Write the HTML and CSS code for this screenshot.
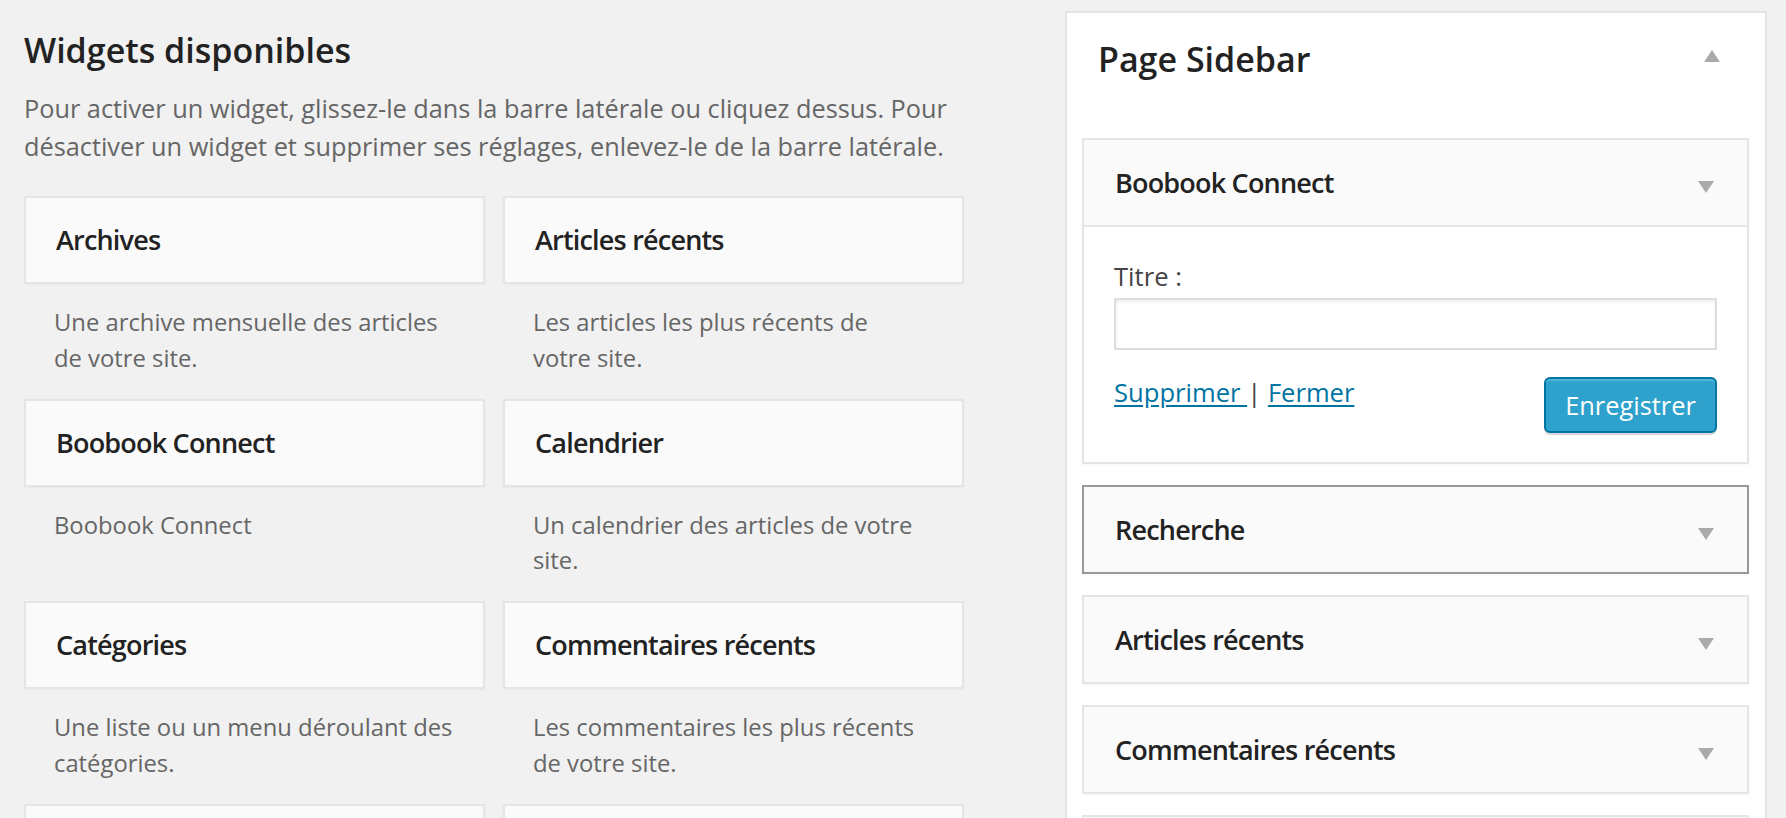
FILE: index.html
```html
<!DOCTYPE html>
<html lang="fr">
<head>
<meta charset="utf-8">
<title>Widgets</title>
<link rel="stylesheet" href="styles.css">
</head>
<body>
<div class="page">
  <section class="available">
    <h2 class="heading">Widgets disponibles</h2>
    <p class="intro">Pour activer un widget, glissez-le dans la barre latérale ou cliquez dessus. Pour désactiver un widget et supprimer ses réglages, enlevez-le de la barre latérale.</p>
    <div class="widget-grid">
      <div class="widget-item">
        <div class="widget-card"><h4 class="widget-title">Archives</h4></div>
        <p class="widget-desc">Une archive mensuelle des articles de votre site.</p>
      </div>
      <div class="widget-item">
        <div class="widget-card"><h4 class="widget-title">Articles récents</h4></div>
        <p class="widget-desc">Les articles les plus récents de votre site.</p>
      </div>
      <div class="widget-item">
        <div class="widget-card"><h4 class="widget-title">Boobook Connect</h4></div>
        <p class="widget-desc">Boobook Connect</p>
      </div>
      <div class="widget-item">
        <div class="widget-card"><h4 class="widget-title">Calendrier</h4></div>
        <p class="widget-desc">Un calendrier des articles de votre site.</p>
      </div>
      <div class="widget-item">
        <div class="widget-card"><h4 class="widget-title">Catégories</h4></div>
        <p class="widget-desc">Une liste ou un menu déroulant des catégories.</p>
      </div>
      <div class="widget-item">
        <div class="widget-card"><h4 class="widget-title">Commentaires récents</h4></div>
        <p class="widget-desc">Les commentaires les plus récents de votre site.</p>
      </div>
      <div class="widget-item">
        <div class="widget-card"></div>
      </div>
      <div class="widget-item">
        <div class="widget-card"></div>
      </div>
    </div>
  </section>

  <aside class="sidebar">
    <div class="sidebar-head">
      <h3 class="sidebar-title">Page Sidebar</h3>
      <svg class="toggle toggle-up" width="16" height="12" viewBox="0 0 16 12"><polygon points="8,0 16,12 0,12"/></svg>
    </div>
    <div class="sidebar-widgets">
      <div class="sw">
        <div class="sw-top">
          <h4 class="sw-title">Boobook Connect</h4>
          <svg class="toggle toggle-down" width="16" height="12" viewBox="0 0 16 12"><polygon points="0,0 16,0 8,12"/></svg>
        </div>
        <div class="sw-inside">
          <label class="field-label" for="titre">Titre :</label>
          <input class="field-input" id="titre" type="text">
          <div class="sw-actions">
            <div class="sw-links"><a class="link" href="#">Supprimer </a> | <a class="link" href="#">Fermer</a></div>
            <button class="btn-primary" type="button">Enregistrer</button>
          </div>
        </div>
      </div>
      <div class="sw sw-hover">
        <div class="sw-top">
          <h4 class="sw-title">Recherche</h4>
          <svg class="toggle toggle-down" width="16" height="12" viewBox="0 0 16 12"><polygon points="0,0 16,0 8,12"/></svg>
        </div>
      </div>
      <div class="sw">
        <div class="sw-top">
          <h4 class="sw-title">Articles récents</h4>
          <svg class="toggle toggle-down" width="16" height="12" viewBox="0 0 16 12"><polygon points="0,0 16,0 8,12"/></svg>
        </div>
      </div>
      <div class="sw">
        <div class="sw-top">
          <h4 class="sw-title">Commentaires récents</h4>
          <svg class="toggle toggle-down" width="16" height="12" viewBox="0 0 16 12"><polygon points="0,0 16,0 8,12"/></svg>
        </div>
      </div>
      <div class="sw">
        <div class="sw-top"></div>
      </div>
    </div>
  </aside>
</div>
</body>
</html>
```

FILE: styles.css
```css
html {
  overflow: hidden;
  height: 100%;
}

body {
  margin: 0;
  background: #f1f1f1;
  font-family: "Open Sans", "Noto Sans", "Liberation Sans", sans-serif;
  color: #444;
}

.page {
  display: flex;
  align-items: flex-start;
  padding-left: 24px;
}

/* ---------- left: available widgets ---------- */
.available {
  width: 940px;
  flex: none;
}

.heading {
  margin: 27px 0 0;
  font-size: 34px;
  line-height: 46px;
  font-weight: 600;
  color: #222;
}

.intro {
  margin: 16px 0 0;
  font-size: 25.3px;
  line-height: 38px;
  color: #666;
}

.widget-grid {
  margin-top: 31px;
  display: grid;
  grid-template-columns: 461px 461px;
  column-gap: 18px;
}

.widget-item {
  height: 202.5px;
}

.widget-card {
  height: 88px;
  box-sizing: border-box;
  border: 2px solid #e5e5e5;
  background: #fafafa;
  box-shadow: 0 1px 2px rgba(0, 0, 0, 0.04);
  padding: 0 30px;
}

.widget-title {
  margin: 0;
  font-size: 27px;
  letter-spacing: -0.8px;
  line-height: 84px;
  font-weight: 600;
  color: #222;
  white-space: nowrap;
}

.widget-desc {
  margin: 0;
  padding: 21px 26px 0 30px;
  font-size: 23.8px;
  line-height: 35.5px;
  color: #666;
}

.widget-item:nth-child(even) .widget-desc {
  padding-right: 40px;
}

/* ---------- right: sidebar ---------- */
.sidebar {
  flex: none;
  width: 702px;
  box-sizing: border-box;
  margin: 11px 0 0 101px;
  border: 2px solid #e5e5e5;
  background: #fff;
}

.sidebar-head {
  height: 125px;
  box-sizing: border-box;
  padding: 16px 45px 0 31px;
  display: flex;
  justify-content: space-between;
  align-items: flex-start;
}

.sidebar-title {
  margin: 0;
  font-size: 34px;
  line-height: 60px;
  font-weight: 600;
  color: #222;
}

.toggle {
  flex: none;
  fill: #aaa;
}

.toggle-up {
  margin-top: 21px;
}

.toggle-down {
  margin-top: 8px;
}

.sidebar-widgets {
  padding: 0 16px 0 15px;
}

.sw {
  border: 2px solid #e5e5e5;
  background: #fafafa;
  box-shadow: 0 1px 2px rgba(0, 0, 0, 0.04);
  margin-bottom: 21px;
}

.sw-hover {
  border-color: #999;
}

.sw-top {
  height: 85px;
  display: flex;
  align-items: center;
  justify-content: space-between;
  padding: 0 33px 0 31px;
}

.sw-title {
  margin: 0;
  font-size: 27px;
  letter-spacing: -0.8px;
  line-height: 85px;
  font-weight: 600;
  color: #222;
}

.sw-inside {
  border-top: 2px solid #e5e5e5;
  background: #fff;
  padding: 31px 30px 29px;
}

.field-label {
  display: block;
  font-size: 25.6px;
  line-height: 38px;
  color: #444;
}

.field-input {
  display: block;
  box-sizing: border-box;
  width: 100%;
  height: 52px;
  margin: 2px 0 0;
  border: 2px solid #ddd;
  background: #fff;
  box-shadow: inset 0 2px 3px rgba(0, 0, 0, 0.07);
  padding: 0 8px;
  font: inherit;
}

.sw-actions {
  margin-top: 24px;
  display: flex;
  justify-content: space-between;
  align-items: flex-start;
}

.sw-links {
  font-size: 25.6px;
  line-height: 38px;
  color: #444;
}

.link {
  color: #0074a2;
  text-decoration: underline;
  text-underline-offset: 3px;
}

.btn-primary {
  margin-top: 3px;
  width: 173px;
  height: 56px;
  box-sizing: border-box;
  border: 2px solid #0074a2;
  border-radius: 6px;
  background: #2ea2cc;
  box-shadow: inset 0 2px 0 rgba(120, 200, 230, 0.5), 0 2px 0 rgba(0, 0, 0, 0.15);
  color: #fff;
  font-family: "Open Sans", "Noto Sans", "Liberation Sans", sans-serif;
  font-size: 25.4px;
  line-height: 50px;
  padding: 0;
}
```
